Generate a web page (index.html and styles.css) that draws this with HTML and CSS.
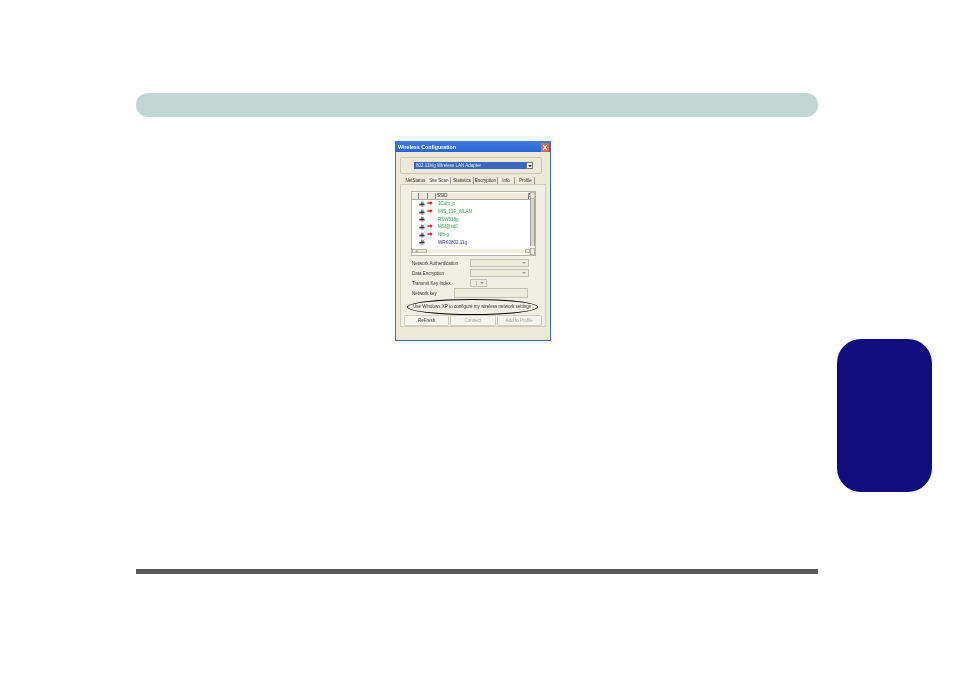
FILE: index.html
```html
<!DOCTYPE html>
<html lang="en">
<head>
    <meta charset="UTF-8">
    <title>Wireless Configuration</title>
    <link rel="stylesheet" href="styles.css">
</head>
<body>
    <div class="headerBar"></div>
    <div class="dialog">
        <div class="titleBar">
            <span>Wireless Configuration</span>
            <div class="closeBtn">
                <svg viewBox="0 0 8 9" width="8" height="9"><path d="M2 2 L6 7 M6 2 L2 7" stroke="#fff" stroke-width="1.2"/></svg>
            </div>
        </div>
        <div class="dialogBody">
            <div class="adapterBox">
                <div class="combo">
                    <div class="comboText">802.11b/g Wireless LAN Adapter</div>
                    <div class="comboBtn"><i class="arrow"></i></div>
                </div>
            </div>
            <ul class="tabs">
                <li class="netTab">NetStatus</li>
                <li class="siteTab active">Site Scan</li>
                <li class="statTab">Statistics</li>
                <li class="encTab">Encryption</li>
                <li class="infoTab">Info</li>
                <li class="profTab">Profile</li>
            </ul>
            <div class="panel">
                <div class="list">
                    <div class="listMain">
                        <div class="listHead">
                            <span class="c1"></span><span class="c2"></span><span class="c3"></span>
                            <span class="c4">SSID</span><span class="c5">$</span>
                        </div>
                        <div class="row"><svg class="pc" viewBox="0 0 8 7"><use href="#pcIcon"/></svg><svg class="link" viewBox="0 0 7 5"><use href="#linkIcon"/></svg><span class="ssid green">3Com_p</span></div>
                        <div class="row"><svg class="pc" viewBox="0 0 8 7"><use href="#pcIcon"/></svg><svg class="link" viewBox="0 0 7 5"><use href="#linkIcon"/></svg><span class="ssid green">MIS_13F_WLAN</span></div>
                        <div class="row"><svg class="pc" viewBox="0 0 8 7"><use href="#pcIcon"/></svg><span class="noLink"></span><span class="ssid green">RSW518g</span></div>
                        <div class="row"><svg class="pc" viewBox="0 0 8 7"><use href="#pcIcon"/></svg><svg class="link" viewBox="0 0 7 5"><use href="#linkIcon"/></svg><span class="ssid green">MSI@sd0</span></div>
                        <div class="row"><svg class="pc" viewBox="0 0 8 7"><use href="#pcIcon"/></svg><svg class="link" viewBox="0 0 7 5"><use href="#linkIcon"/></svg><span class="ssid green">Nfh-g</span></div>
                        <div class="row"><svg class="pc" viewBox="0 0 8 7"><use href="#pcIcon"/></svg><span class="noLink"></span><span class="ssid navy">WRK0802.11g</span></div>
                        <div class="hScroll"><b></b><b class="thumb"></b><em></em><b></b></div>
                    </div>
                    <div class="vScroll"><b></b><em></em><b></b></div>
                </div>
                <div class="formRow authRow"><label>Network Authentication</label><div class="select"><i class="arrow"></i></div></div>
                <div class="formRow encRow"><label>Data Encryption</label><div class="select"><i class="arrow"></i></div></div>
                <div class="formRow keyRow"><label>Transmit Key Index</label><div class="spin"><span>1</span><i class="arrow"></i></div></div>
                <div class="formRow netKeyRow"><label>Network key</label><div class="keyInput"></div></div>
                <div class="useXp">Use Windows XP to configure my wireless network settings</div>
                <div class="circled"></div>
                <div class="buttons">
                    <div class="btn">ReFresh</div>
                    <div class="btn off">Connect</div>
                    <div class="btn off">Add to Profile</div>
                </div>
            </div>
        </div>
    </div>
    <div class="footerRule"></div>
    <div class="sideTab"></div>

    <svg class="defs" width="0" height="0">
        <symbol id="pcIcon" viewBox="0 0 8 7">
            <path d="M3 0 H6 V3 H3 Z" fill="#555"/>
            <path d="M4 1 H5 V2 H4 Z" fill="#ddd"/>
            <path d="M1 3 H7 L8 5 H0 Z" fill="#333"/>
            <path d="M2 5 H6 V7 H2 Z" fill="#888"/>
        </symbol>
        <symbol id="linkIcon" viewBox="0 0 7 5">
            <path d="M0 1.5 H4 V0 L7 2.5 L4 5 V3.5 H0 Z" fill="#e0141c"/>
        </symbol>
    </svg>
</body>
</html>
```

FILE: styles.css
```css
*{
    margin: 0;
    padding: 0;
    box-sizing: border-box;
    list-style: none;
}
body{
    position: relative;
    width: 954px;
    height: 673px;
    padding-top: 93px;
    background: #fff;
    font-family: "Liberation Sans", Arial, sans-serif;
    overflow: hidden;
}
.defs{
    position: absolute;
}
.headerBar{
    width: 682px;
    height: 24px;
    margin-left: 136px;
    border-radius: 12px;
    background: #bfd6d2;
}
.footerRule{
    width: 682px;
    height: 5px;
    margin: 228px 0 0 136px;
    background: #595959;
}
.sideTab{
    position: absolute;
    top: 339px;
    left: 837px;
    width: 95px;
    height: 153px;
    border-radius: 24px;
    background: #110d7f;
}

/* dialog */
.dialog{
    width: 156px;
    height: 200px;
    margin: 24px 0 0 395px;
    padding: 0 1px 1px;
    background: #3a68c8;
    filter: blur(0.4px);
}
.titleBar{
    display: flex;
    justify-content: space-between;
    align-items: center;
    height: 11px;
    padding: 1px 1px 0 2px;
    background: linear-gradient(#3f7be0,#2a66d4);
    color: #fff;
    font-size: 5.3px;
    font-weight: bold;
}
.closeBtn{
    display: flex;
    width: 8px;
    height: 9px;
    border-radius: 1px;
    background: #de6a45;
}
.dialogBody{
    position: relative;
    height: 188px;
    padding: 5px 8px 0 4px;
    background: #ece9d8;
    font-size: 4.5px;
    color: #333;
}
.adapterBox{
    height: 17px;
    padding: 4px 8px 0 13px;
    border: 1px solid #c9c6b6;
    border-radius: 2px;
}
.combo{
    display: flex;
    height: 7px;
    background: #fff;
}
.comboText{
    flex: 1;
    padding-left: 2px;
    background: #3a66bd;
    color: #e6ebf7;
    line-height: 7px;
}
.comboBtn{
    display: flex;
    align-items: center;
    justify-content: center;
    width: 7px;
    border: 1px solid #777;
    background: #eee;
}
.arrow{
    display: block;
    width: 0;
    height: 0;
    border-left: 2px solid transparent;
    border-right: 2px solid transparent;
    border-top: 2px solid #222;
}

/* tabs */
.tabs{
    display: flex;
    height: 7px;
    margin: 3px 0 0 4px;
    line-height: 7px;
    text-align: center;
}
.tabs li{
    border-right: 1px solid #999;
    white-space: nowrap;
}
.netTab{ width: 23px; border-right: 0 !important; }
.tabs .siteTab{
    width: 23px;
    margin-left: 1px;
    background: #f6f4ea;
    border-right: 1px solid #999;
}
.statTab{ width: 23px; }
.encTab{ width: 24px; }
.infoTab{ width: 17px; }
.profTab{ width: 18px; margin-left: 2px; }

.panel{
    position: relative;
    height: 143px;
    margin-right: -4px;
    padding: 6px 9px 0 10px;
    border: 1px solid #cfccbc;
    background: #f1efe3;
}
.list{
    display: flex;
    height: 65px;
    background: #fff;
    border: 1px solid #b4b2a4;
}
.listMain{
    flex: 1;
    min-width: 0;
}
.vScroll{
    display: flex;
    flex-direction: column;
    width: 5px;
    background: #f1efe3;
}
.vScroll b{
    display: block;
    flex: none;
    width: 5px;
    height: 7px;
    border: 1px solid #b9b7aa;
    background: #ece9d8;
}
.vScroll em{
    display: block;
    flex: 1;
    margin: 0 0 2px;
    border: 1px solid #a3a39a;
    border-width: 0 1px;
    background: #d8d6cc;
}
.hScroll b{
    display: block;
    flex: none;
    width: 5px;
    height: 4px;
    border: 1px solid #b9b7aa;
    background: #ece9d8;
}
.hScroll .thumb{
    width: 10px;
}
.listHead{
    display: flex;
    height: 7px;
    line-height: 6px;
    margin-top: 1px;
    background: #ece9d8;
    border-bottom: 1px solid #aaa;
}
.listHead span{
    flex: none;
    height: 100%;
    border-right: 1px solid #888;
}
.c1{ width: 7px; }
.c2{ width: 9px; }
.c3{ width: 8px; }
.c4{ width: 93px; padding-left: 1px; }
.c5{ width: 4px; border-right: 0 !important; }
.row{
    display: flex;
    align-items: center;
    height: 7.7px;
    padding-left: 7px;
}
.pc{
    flex: none;
    width: 6px;
    height: 6px;
}
.link{
    flex: none;
    width: 6px;
    height: 4px;
    margin: -2px 0 0 2px;
}
.noLink{
    flex: none;
    width: 8px;
}
.ssid{
    margin-left: 5px;
}
.green{ color: #2aa040; }
.navy{ color: #2a2a90; }
.hScroll{
    display: flex;
    height: 4px;
    margin-top: 3px;
    background: #f1efe3;
}
.hScroll em{
    display: block;
    flex: 1;
}

/* form */
.formRow{
    position: relative;
    display: flex;
    align-items: center;
    height: 8px;
}
.authRow{ margin: 3px 0 2px; }
.encRow{ margin-bottom: 2px; }
.keyRow{ margin-bottom: 1px; }
.netKeyRow{ height: 10px; }
.formRow label{
    flex: none;
    padding-left: 1px;
}
.authRow label,.encRow label,.keyRow label{
    width: 59px;
}
.netKeyRow label{
    width: 43px;
}
.select,.spin{
    display: flex;
    align-items: center;
    justify-content: flex-end;
    height: 8px;
    padding-right: 2px;
    border: 1px solid #c2c0b2;
    background: #ecebdc;
}
.select{ width: 59px; }
.spin{
    width: 17px;
    justify-content: space-between;
    padding-left: 4px;
    color: #999;
}
.select .arrow,.spin .arrow{
    border-top-color: #999;
}
.keyInput{
    width: 74px;
    height: 10px;
    border: 1px solid #c2c0b2;
    background: #ecebdc;
}
.useXp{
    margin: 5px 0 0 2px;
    height: 8px;
    line-height: 8px;
    white-space: nowrap;
}
.circled{
    position: absolute;
    top: 114px;
    left: 6px;
    width: 131px;
    height: 16px;
    border: 1.5px solid #000;
    border-radius: 50%;
}
.buttons{
    display: flex;
    gap: 1px;
    height: 11px;
    margin: 4px 0 0 -7px;
    width: 138px;
}
.btn{
    flex: 1;
    line-height: 10px;
    text-align: center;
    background: #f7f6ee;
    border: 1px solid #cfcdc0;
    border-radius: 1px;
}
.btn.off{
    color: #a5a397;
}
```
